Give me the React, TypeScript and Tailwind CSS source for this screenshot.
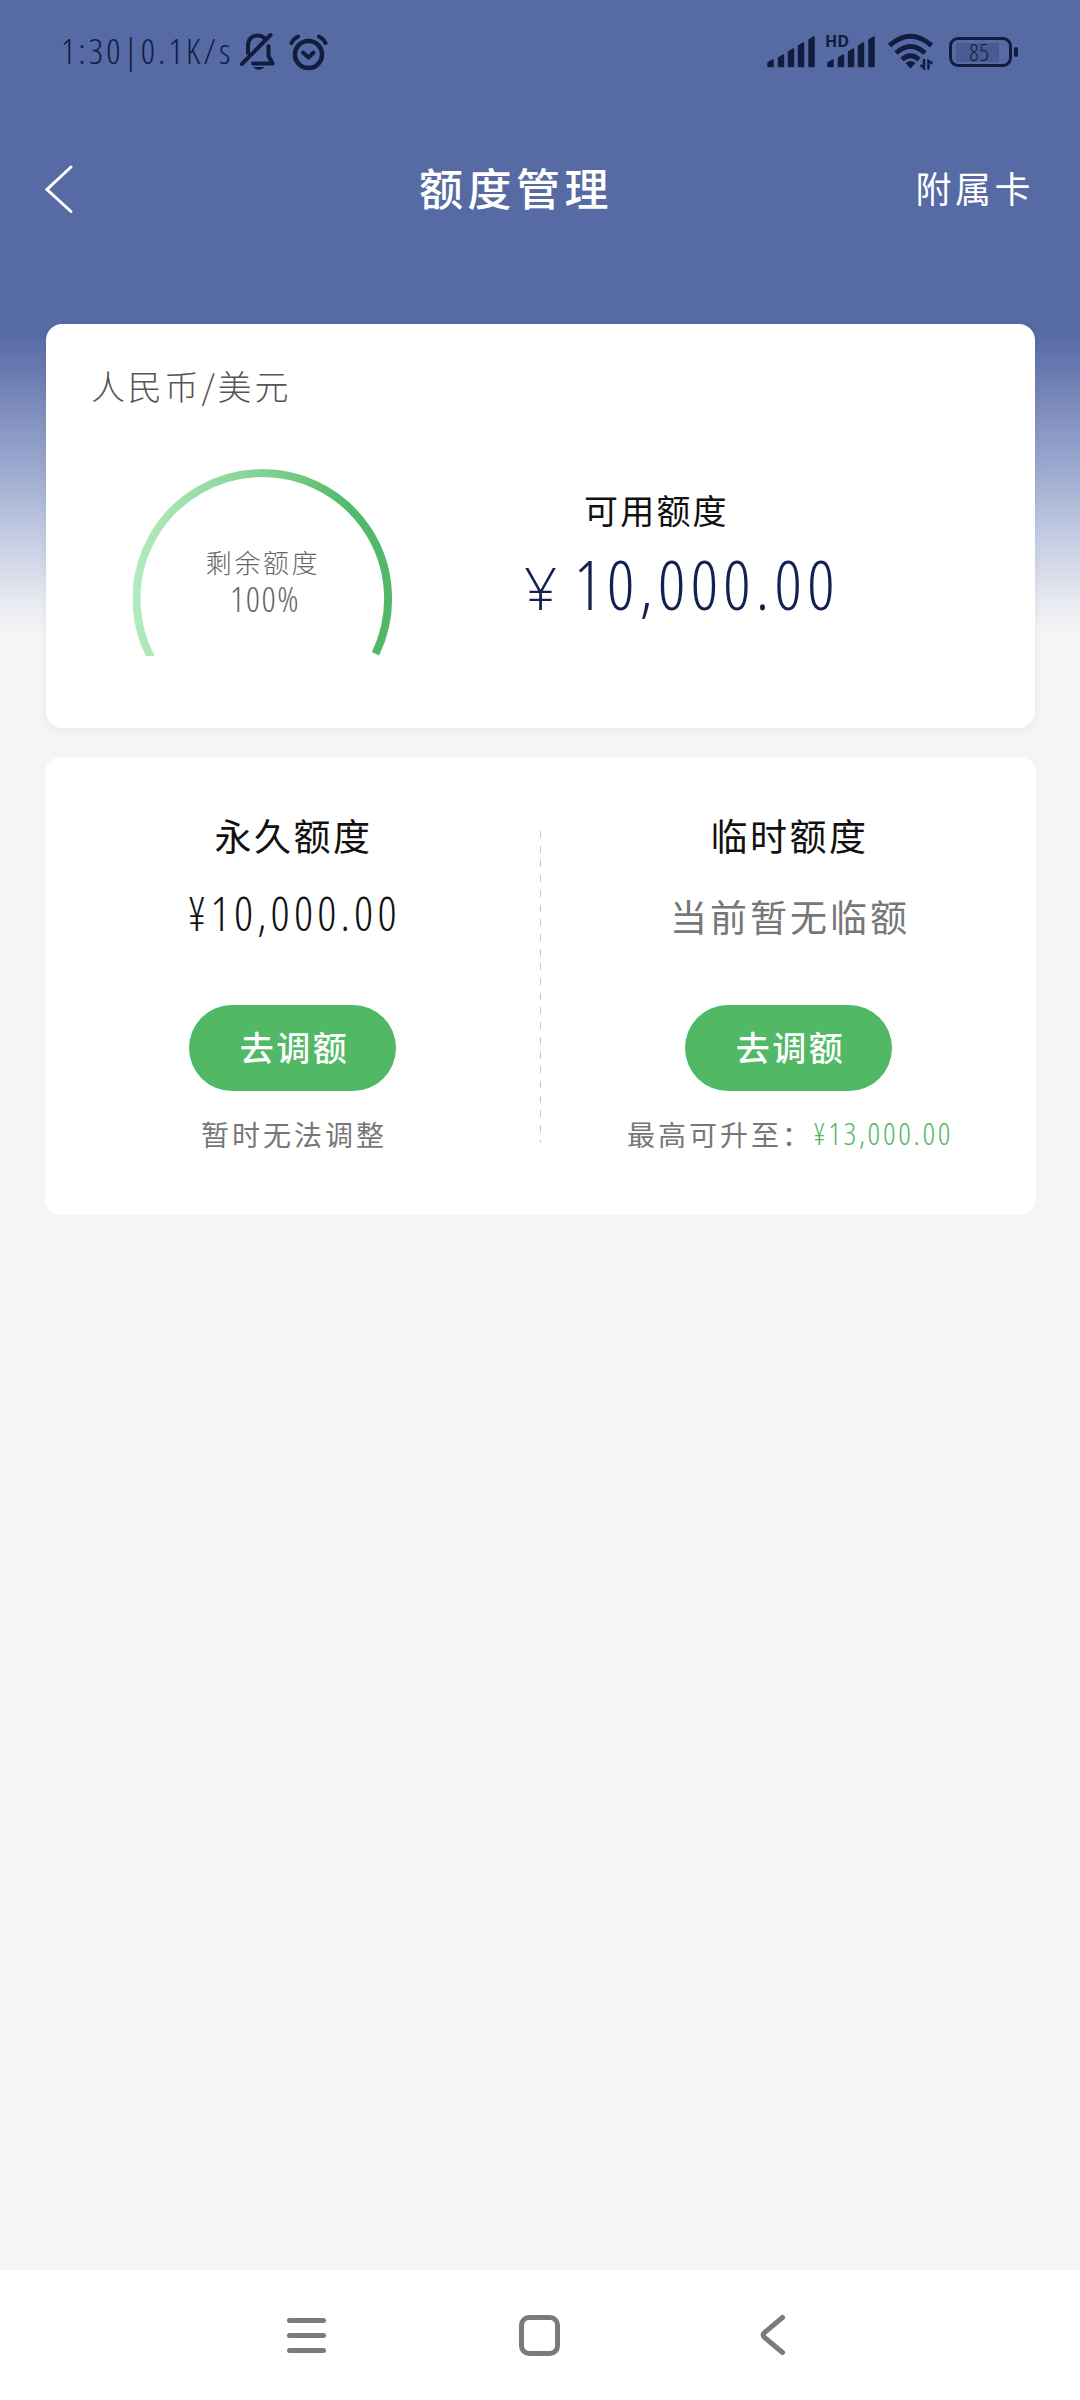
import React from "react";

type LimitPanelProps = {
  title: string;
  value: React.ReactNode;
  hint: React.ReactNode;
};

const bars = [
  { x: 1, h: 8 },
  { x: 11.5, h: 13 },
  { x: 21.5, h: 19 },
  { x: 31.5, h: 25 },
  { x: 42, h: 31 },
];

function Signal() {
  return (
    <svg width="48" height="32" viewBox="0 0 48 32" fill="currentColor">
      {bars.map((bar) => (
        <path
          key={bar.x}
          d={`M${bar.x} 30.500V${32 - bar.h + 3}L${bar.x + 5} ${32 - bar.h}V30.500z`}
          stroke="currentColor"
          strokeWidth="1.500"
          strokeLinejoin="round"
        />
      ))}
    </svg>
  );
}

function StatusBar() {
  return (
    <div className="flex h-[104px] items-center pl-[61px] pr-[62px] text-[#121c3e]">
      <span className="w-[179px] whitespace-nowrap pb-1 font-['Open_Sans',sans-serif] font-stretch-semi-condensed text-[35px] font-light leading-none tracking-[3.3px]">
        1:30|0.1K/s
      </span>
      {/* muted bell */}
      <svg width="36" height="40" viewBox="0 0 36 40" fill="none" stroke="currentColor" strokeWidth="4" strokeLinecap="round" strokeLinejoin="round">
        <path d="M8 21V13.500C8 7 12.500 3.500 17.500 3.500C20.500 3.500 23 4.500 24.800 6.500" />
        <path d="M28.500 14V24L32.500 31.500H13" />
        <path d="M2 32L30.500 3" />
        <path d="M13.500 35H24C22 38.500 15.500 38.500 13.500 35z" fill="currentColor" stroke="none" />
      </svg>
      <svg className="ml-[13px]" width="40" height="40" viewBox="0 0 40 40" fill="none" stroke="currentColor" strokeWidth="4.500" strokeLinecap="round" strokeLinejoin="round">
        <circle cx="19.500" cy="22.500" r="13.500" />
        <path d="M14 20.500L19.500 25.500L24.500 20.500" strokeWidth="4" />
        <path d="M2.500 11C4 8 6 6 9 4.500M30 4.500C33 6 35 8 36.500 11" strokeWidth="4" />
      </svg>

      <div className="ml-auto flex items-center">
        <Signal />
        <div className="relative ml-3">
          <span className="absolute -left-[2px] -top-[3px] font-['Open_Sans',sans-serif] text-[16px] font-bold leading-none">HD</span>
          <Signal />
        </div>
        <svg className="ml-[13px]" width="48" height="38" viewBox="0 0 48 38" fill="none" stroke="currentColor" strokeWidth="5">
          <path d="M1.500 12.500Q22.500 -6 43.500 12.500" />
          <path d="M8 20Q22.500 7 37 20" />
          <path d="M14 26.500Q22.500 19 31 26.500" />
          <path d="M17.500 30Q22.500 26 27.500 30L22.500 35.500z" fill="currentColor" stroke="none" />
          <path d="M36 26V35L32.500 32M40.500 36.500V28L44.500 30.500" strokeWidth="2.500" />
        </svg>
        <div className="ml-[13px] flex h-[30px] w-[63px] items-center rounded-[9px] border-[3px] border-current p-1">
          <span className="flex h-[19px] w-[43px] items-center justify-center bg-[#4a5b92] pl-1 font-['Open_Sans',sans-serif] font-stretch-semi-condensed text-[23px] font-light leading-none tracking-[1px]">
            85
          </span>
        </div>
        <span className="ml-[2px] h-[10px] w-1 rounded-full bg-current" />
      </div>
    </div>
  );
}

function Gauge() {
  return (
    <div className="relative h-[188px] w-[260px]">
      <svg width="260" height="188" viewBox="0 0 260 188" fill="none">
        <defs>
          <linearGradient id="arc" x1="0" y1="0" x2="1" y2="0">
            <stop offset="0" stopColor="#b1eabd" />
            <stop offset="0.500" stopColor="#83d293" />
            <stop offset="0.850" stopColor="#54b96b" />
            <stop offset="1" stopColor="#52b868" />
          </linearGradient>
        </defs>
        <path d="M20.500 194A125.800 125.800 0 1 1 242.500 185.700" stroke="url(#arc)" strokeWidth="8" />
      </svg>
      <div className="absolute inset-x-0 top-[79px] text-center text-[#666]">
        <p className="text-[26px] font-light leading-[30px] tracking-[2.6px]">剩余额度</p>
        <p className="pl-1 font-['Open_Sans',sans-serif] font-stretch-semi-condensed text-[35px] font-light leading-[44px] tracking-[1.5px]">
          100%
        </p>
      </div>
    </div>
  );
}

function LimitPanel({ title, value, hint }: LimitPanelProps) {
  return (
    <div className="flex flex-1 flex-col items-center pt-[57px]">
      <h2 className="pl-[2px] text-[37px] leading-[42px] tracking-[2.5px] text-[#111]">{title}</h2>
      <div className="mt-[36px] flex h-[48px] items-center">{value}</div>
      <button className="mt-[65px] h-[86px] w-[207px] rounded-full bg-[#51b865] pb-[3px] pl-[4px] text-[34px] font-medium leading-none tracking-[2.5px] text-white">
        去调额
      </button>
      <div className="mt-[23px] flex h-[40px] items-center pl-[3px] text-[28px] leading-none tracking-[3px] text-[#777]">
        {hint}
      </div>
    </div>
  );
}

function NavBar() {
  return (
    <div className="flex h-[130px] items-center bg-white text-[#7b7b7b]">
      <div className="ml-[287px] flex w-[39px] flex-col gap-[10px]">
        <span className="h-[5px] rounded-full bg-current" />
        <span className="h-[5px] rounded-full bg-current" />
        <span className="h-[5px] rounded-full bg-current" />
      </div>
      <div className="ml-[193px] h-[41px] w-[41px] rounded-[10px] border-[5px] border-current" />
      <svg className="ml-[200px]" width="26" height="42" viewBox="0 0 26 42" fill="none" stroke="currentColor" strokeWidth="5" strokeLinecap="round">
        <path d="M22.500 3.500L4.500 18.500Q2 21 4.500 23.500L22.500 38.500" />
      </svg>
    </div>
  );
}

export default function App() {
  return (
    <div className="flex h-[2400px] w-[1080px] flex-col overflow-hidden bg-[#f5f5f5] font-['Noto_Sans_CJK_SC',sans-serif]">
      <div className="flex-1 bg-[linear-gradient(to_bottom,#566aa4_0px,#566aa4_332px,#6979b0_367px,#9ba9cf_467px,#c6cee4_540px,#e7e9f0_600px,#f5f5f5_632px)]">
        <StatusBar />
        <header className="flex h-[170px] items-center pl-[45px] pr-[46px] text-white">
          <svg width="28" height="48" viewBox="0 0 28 48" fill="none" stroke="currentColor" strokeWidth="3" strokeLinecap="round">
            <path d="M26 2L2 24.500L26 46.500" />
          </svg>
          <h1 className="ml-[346px] pb-1 text-[44px] font-medium leading-none tracking-[4.500px]">额度管理</h1>
          <span className="ml-auto pb-1 text-[36px] leading-none tracking-[3.500px]">附属卡</span>
        </header>

        <section className="mx-[46px] mt-[50px] h-[404px] w-[989px] rounded-[16px] bg-white pt-[41px] shadow-[0_2px_8px_rgba(0,0,0,0.06)]">
          <p className="pl-[45px] text-[34px] font-light leading-[42px] tracking-[2.8px] text-[#555]">人民币/美元</p>
          <div className="mt-[61px] flex pl-[87px]">
            <Gauge />
            <div className="flex flex-col pl-[131px] pt-[21px]">
              <p className="pl-[60px] text-[34px] leading-[42px] tracking-[2.2px] text-[#111]">可用额度</p>
              <p className="mt-[7px] flex items-baseline font-['Open_Sans',sans-serif] font-stretch-semi-condensed leading-[92px] text-[#152052]">
                <span className="text-[58px] font-[350] font-stretch-normal">¥</span>
                <span className="ml-[17px] text-[68px] font-[350] tracking-[5px]">10,000.00</span>
              </p>
            </div>
          </div>
        </section>

        <section className="mx-[45px] mt-[29px] flex h-[458px] w-[991px] rounded-[16px] bg-white">
          <LimitPanel
            title="永久额度"
            value={
              <span className="pb-[5px] pl-[3px] font-['Open_Sans',sans-serif] font-stretch-semi-condensed text-[47px] font-light leading-none tracking-[4.200px] text-[#111]">
                ¥10,000.00
              </span>
            }
            hint={<span>暂时无法调整</span>}
          />
          <div className="mt-[74px] h-[312px] w-px bg-[repeating-linear-gradient(to_bottom,#c8c8c8_0px,#c8c8c8_7px,transparent_7px,transparent_14.700px)]" />
          <LimitPanel
            title="临时额度"
            value={<span className="pl-[3px] text-[37px] leading-none tracking-[3px] text-[#777]">当前暂无临额</span>}
            hint={
              <>
                <span>最高可升至：</span>
                <span className="pb-[2px] font-['Open_Sans',sans-serif] font-stretch-semi-condensed text-[31px] font-light tracking-[2.700px] text-[#51b865]">
                  ¥13,000.00
                </span>
              </>
            }
          />
        </section>
      </div>
      <NavBar />
    </div>
  );
}
